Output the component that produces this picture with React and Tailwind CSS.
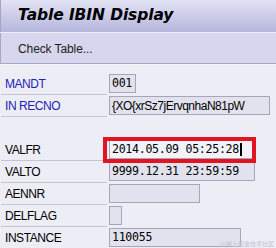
import React from 'react'

// SAP GUI style display screen for table IBIN
const rows = [
  { label: 'MANDT', value: '001', w: 'w-[27px]', blue: true, mono: true },
  { label: 'IN RECNO', value: '{XO{xrSz7jErvqnhaN81pW', w: 'w-[161px]', blue: true },
  { spacer: true },
  { label: 'VALFR', value: '2014.05.09 05:25:28', w: 'w-[146px]', mono: true, focus: true },
  { label: 'VALTO', value: '9999.12.31 23:59:59', w: 'w-[146px]', mono: true },
  { label: 'AENNR', value: '', w: 'w-[91px]' },
  { label: 'DELFLAG', value: '', w: 'w-[13px]' },
  { label: 'INSTANCE', value: '110055', w: 'w-[132px]', mono: true },
]

function Row({ row }) {
  if (row.spacer) return <div className="h-[22px]" />
  return (
    <div className="flex h-[22px] items-start">
      <div
        className={`ml-[1px] w-[106px] h-[22px] border-b border-[#c4c4d4] pl-[4px] flex items-center text-[12px] tracking-[-0.45px] ${row.blue ? 'text-[#2222b4]' : 'text-black'}`}
      >
        {row.label}
      </div>
      <div
        className={`relative ml-[2px] mt-[1px] h-[19px] ${row.w} border border-[#a6a6b8] ${row.focus ? 'bg-[#f2f2f8]' : 'bg-[#e2e2ee]'} flex items-center pl-[2px] overflow-hidden whitespace-nowrap ${row.mono ? 'font-["DejaVu_Sans_Mono",monospace] text-[11.6px] tracking-[-0.3px]' : 'text-[12px] tracking-[-0.5px]'} text-black`}
      >
        {row.value}
        {row.focus && <span className="ml-[1px] inline-block w-[2px] h-[13px] bg-black" />}
      </div>
    </div>
  )
}

export default function App() {
  return (
    <div className="relative w-[276px] h-[248px] overflow-hidden bg-[#ededf6] font-['Liberation_Sans',Arial,sans-serif]">
      {/* タイトルバー */}
      <div className="h-[32px] border-l border-[#a4a4c4] bg-gradient-to-b from-[#e2e2f4] to-[#b6b6dc] flex items-center pl-[17px]">
        <span className="font-['DejaVu_Sans',sans-serif] font-bold italic text-[15.5px] text-black tracking-[-0.1px]">
          Table IBIN Display
        </span>
      </div>
      <div className="h-px bg-[#eeeef8]" />
      {/* ツールバー */}
      <div className="h-[31px] border-l border-b border-[#a8a8c6] bg-[#d6d6ee] flex items-center pl-[17px] pt-[1px]">
        <span className="text-[12px] text-[#202020] tracking-[-0.1px]">Check Table...</span>
      </div>
      <div className="h-px bg-[#f6f6fc]" />

      <div className="pt-[8px]">
        {rows.map((r, i) => (
          <Row key={i} row={r} />
        ))}
      </div>

      {/* 赤枠 */}
      <div className="absolute left-[103px] top-[137px] w-[153px] h-[26px] border-[4px] border-[#e0151f]" />

      <div className="absolute right-[2px] bottom-[1px] text-[6px] text-[#c2c2d2] font-['Noto_Sans_CJK_SC',sans-serif] leading-none">
        @稀土掘金技术社区
      </div>
    </div>
  )
}
